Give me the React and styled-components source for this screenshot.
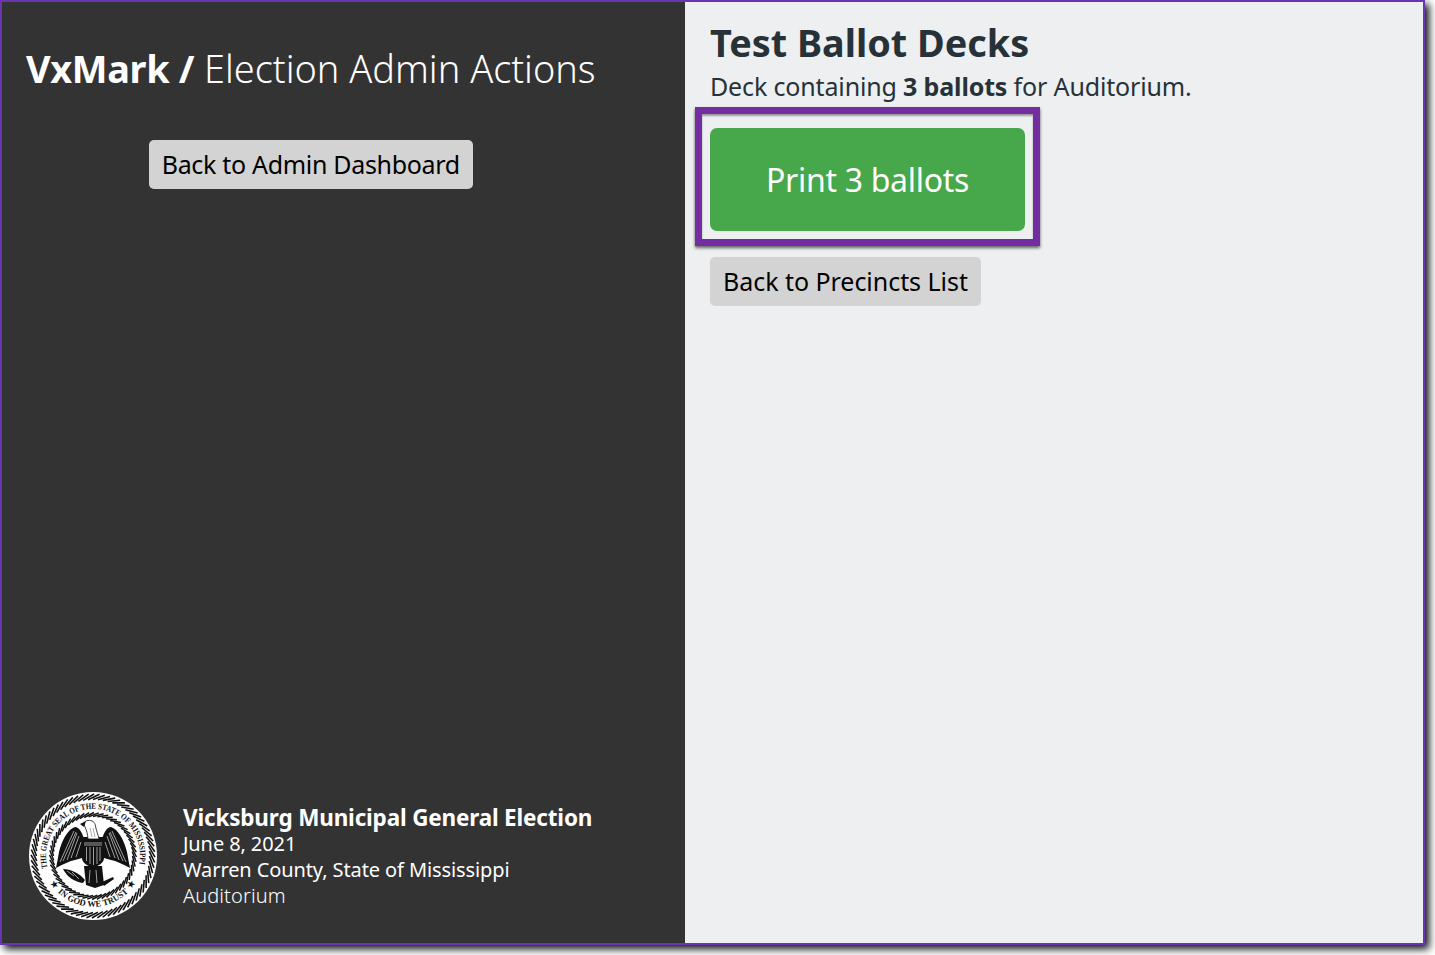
import styled, { createGlobalStyle } from "styled-components";

const GlobalStyle = createGlobalStyle`
  html, body {
    margin: 0;
    min-height: 100vh;
    background: #ffffff;
    font-family: "Noto Sans", "Open Sans", sans-serif;
  }
  #root {
    min-height: 955px;
  }
`;

function ropeRing(r1, r2, count, width) {
  const lines = [];
  for (let i = 0; i < count; i++) {
    const a = (i * 2 * Math.PI) / count;
    const b = a + (2.2 * 2 * Math.PI) / count;
    lines.push(
      <line
        key={i}
        x1={64 + r1 * Math.cos(a)}
        y1={64 + r1 * Math.sin(a)}
        x2={64 + r2 * Math.cos(b)}
        y2={64 + r2 * Math.sin(b)}
        stroke="#111"
        strokeWidth={width}
      />
    );
  }
  return lines;
}

function Seal() {
  return (
    <svg width="128" height="128" viewBox="0 0 128 128">
      <defs>
        <path id="sealTop" d="M 18.6 76 A 47 47 0 1 1 109.4 76" />
        <path id="sealBottom" d="M 16.5 81.3 A 50.5 50.5 0 0 0 111.5 81.3" />
      </defs>
      <circle cx="64" cy="64" r="64" fill="#fff" />
      {ropeRing(56.5, 62, 72, 1.6)}
      {ropeRing(39.5, 43.5, 56, 1.5)}
      <text fontFamily="Liberation Serif, serif" fontSize="8.4" fontWeight="700" fill="#111">
        <textPath href="#sealTop" textLength="168" lengthAdjust="spacingAndGlyphs">
          THE GREAT SEAL OF THE STATE OF MISSISSIPPI
        </textPath>
      </text>
      <text fontFamily="Liberation Serif, serif" fontSize="8.6" fontWeight="700" fill="#111">
        <textPath href="#sealBottom" startOffset="50%" textAnchor="middle">
          ★{"\u00a0\u00a0"}IN GOD WE TRUST{"\u00a0\u00a0"}★
        </textPath>
      </text>
      {/* eagle */}
      <g fill="#111">
        <path d="M55 47 C53 40 50 35 46 35 C39 37 33 48 30 60 C29 66 28 71 27 76 C34 72 41 69 46 68 L53 66 Z" />
        <path d="M73 47 C75 40 78 35 82 35 C89 37 95 48 98 60 C99 66 100 71 101 76 C94 72 87 69 82 68 L75 66 Z" />
        <path d="M53 45 L75 45 L75 66 C75 71 69 74 64 76 C59 74 53 71 53 66 Z" />
        <path d="M55 74 L73 74 L75 93 L66 96 L57 93 Z" />
        <path d="M34 77 C42 77 50 81 56 88 L54 91 C46 90 38 85 34 77 Z" />
        <path d="M73 90 L84 85 L85 87 L75 94 Z" />
      </g>
      <g stroke="#fff" strokeWidth="0.6" fill="none">
        <path d="M45 39 L31 70" /><path d="M47 40 L34 69" /><path d="M48 41 L38 68" /><path d="M50 44 L42 66" /><path d="M52 50 L47 65" />
        <path d="M83 39 L97 70" /><path d="M81 40 L94 69" /><path d="M80 41 L90 68" /><path d="M78 44 L86 66" /><path d="M76 50 L81 65" />
        <path d="M57.5 55 L57.5 69" /><path d="M61 55 L61 72" /><path d="M64.5 55 L64.5 73" /><path d="M68 55 L68 72" /><path d="M71 55 L71 69" />
        <path d="M55 51 L73 51 M55 53 L73 53" />
        <path d="M61 78 L60 91" /><path d="M67 78 L68 91" />
        <path d="M38 79 L45 84" /><path d="M43 80 L50 87" />
      </g>
      <path d="M59 47 C58.5 42 58 39 56 35 C54.5 31 55 29 59 28.5 C63 28 66 30 66.5 34 C67 38 69 42 70 47 Z" fill="#fff" stroke="#111" strokeWidth="0.8" />
      <path d="M57 29 L51 32 L55 35 Z" fill="#111" />
      <path d="M61 36 L63 45 M64 36 L66 45" stroke="#555" strokeWidth="0.5" />
    </svg>
  );
}

export default function App() {
  return (
    <>
      <GlobalStyle />
      <Frame>
        <Sidebar>
          <SidebarMain>
            <Title>
              <strong>VxMark /</strong> Election Admin Actions
            </Title>
            <SidebarActions>
              <GrayButton $spacing="-0.31px">Back to Admin Dashboard</GrayButton>
            </SidebarActions>
          </SidebarMain>
          <ElectionInfo>
            <Seal />
            <ElectionText>
              <ElectionName>Vicksburg Municipal General Election</ElectionName>
              <InfoLine>June 8, 2021</InfoLine>
              <InfoLine>Warren County, State of Mississippi</InfoLine>
              <InfoLine $light>Auditorium</InfoLine>
            </ElectionText>
          </ElectionInfo>
        </Sidebar>
        <Content>
          <Heading>Test Ballot Decks</Heading>
          <Lead>
            Deck containing <strong>3 ballots</strong> for Auditorium.
          </Lead>
          <FocusBox>
            <PrintButton>Print 3 ballots</PrintButton>
          </FocusBox>
          <GrayButton $spacing="-0.04px">Back to Precincts List</GrayButton>
        </Content>
      </Frame>
    </>
  );
}

const Frame = styled.div`
  display: flex;
  box-sizing: border-box;
  width: 1425px;
  height: 945px;
  border: 2px solid #6a35b0;
  box-shadow: 4px 4px 8px rgba(0, 0, 0, 0.95);
`;

const Sidebar = styled.aside`
  display: flex;
  flex-direction: column;
  justify-content: space-between;
  box-sizing: border-box;
  width: 683px;
  padding: 0 24px 23px 24px;
  background: #333333;
  color: #ffffff;
`;

const SidebarMain = styled.div`
  display: flex;
  flex-direction: column;
  align-self: flex-start;
`;

const Title = styled.h1`
  margin: 41px 0 0;
  font-size: 37.9px;
  line-height: 50px;
  font-weight: 300;
  white-space: nowrap;
  strong {
    font-weight: 700;
    letter-spacing: -0.35px;
  }
`;

const SidebarActions = styled.div`
  display: flex;
  justify-content: center;
  margin-top: 47px;
`;

const GrayButton = styled.button`
  align-self: flex-start;
  box-sizing: border-box;
  height: 49px;
  padding: 0 13px 2px;
  border: none;
  border-radius: 5px;
  background: #d3d3d3;
  color: #000000;
  font-family: inherit;
  font-size: 25px;
  letter-spacing: ${(p) => p.$spacing};
  white-space: nowrap;
`;

const ElectionInfo = styled.div`
  display: flex;
  align-items: center;
  gap: 26px;
  margin-left: 3px;
`;

const ElectionText = styled.div`
  display: flex;
  flex-direction: column;
`;

const ElectionName = styled.div`
  font-size: 22.5px;
  line-height: 27px;
  font-weight: 700;
  letter-spacing: -0.18px;
`;

const InfoLine = styled.div`
  font-size: 20px;
  line-height: 26px;
  font-weight: ${(p) => (p.$light ? 300 : 400)};
  letter-spacing: ${(p) => (p.$light ? "0.1px" : "-0.1px")};
`;

const Content = styled.main`
  display: flex;
  flex-direction: column;
  flex: 1;
  padding: 18px 25px;
  background: #edeff0;
  color: #263238;
`;

const Heading = styled.h2`
  margin: 0;
  font-size: 37.8px;
  line-height: 46px;
  font-weight: 700;
`;

const Lead = styled.p`
  margin: 1px 0 0;
  font-size: 25px;
  line-height: 38px;
  letter-spacing: -0.15px;
  strong {
    font-weight: 700;
  }
`;

const FocusBox = styled.div`
  align-self: flex-start;
  box-sizing: border-box;
  margin: 2px 0 11px -15px;
  padding: 14px 8px 8px;
  border: 7px solid #732da0;
  box-shadow: 0 2px 3px rgba(0, 0, 0, 0.6), inset 0 2px 2px rgba(0, 0, 0, 0.35);
`;

const PrintButton = styled.button`
  display: block;
  width: 315px;
  height: 103px;
  border: none;
  border-radius: 7px;
  background: #47a74b;
  color: #ffffff;
  font-family: inherit;
  font-size: 32px;
  letter-spacing: -0.3px;
`;
